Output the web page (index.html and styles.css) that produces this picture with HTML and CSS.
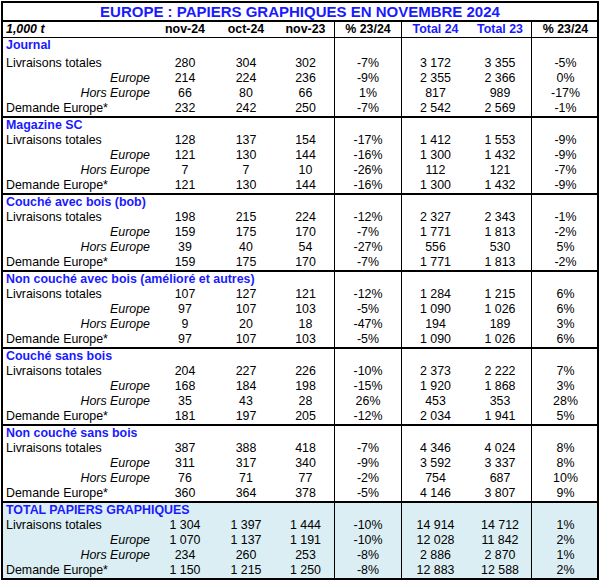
FILE: index.html
```html
<!DOCTYPE html>
<html lang="fr">
<head>
<meta charset="utf-8">
<title>Europe : papiers graphiques</title>
<link rel="stylesheet" href="styles.css">
</head>
<body>
<div class="sheet">
  <div class="title">EUROPE : PAPIERS GRAPHIQUES EN NOVEMBRE 2024</div>
  <div class="row head">
    <span class="lab unit">1,000 t</span><span>nov-24</span><span>oct-24</span><span>nov-23</span><span>% 23/24</span><span class="blue">Total 24</span><span class="blue">Total 23</span><span>% 23/24</span>
  </div>

  <div class="sec first">
    <div class="row st"><span class="lab sect">Journal</span><span></span><span></span><span></span><span></span><span></span><span></span><span></span></div>
    <div class="row"><span class="lab">Livraisons totales</span><span>280</span><span>304</span><span>302</span><span>-7%</span><span>3 172</span><span>3 355</span><span>-5%</span></div>
    <div class="row"><span class="sub">Europe</span><span>214</span><span>224</span><span>236</span><span>-9%</span><span>2 355</span><span>2 366</span><span>0%</span></div>
    <div class="row"><span class="sub">Hors Europe</span><span>66</span><span>80</span><span>66</span><span>1%</span><span>817</span><span>989</span><span>-17%</span></div>
    <div class="row"><span class="lab">Demande Europe*</span><span>232</span><span>242</span><span>250</span><span>-7%</span><span>2 542</span><span>2 569</span><span>-1%</span></div>
  </div>

  <div class="sec">
    <div class="row"><span class="lab sect">Magazine SC</span><span></span><span></span><span></span><span></span><span></span><span></span><span></span></div>
    <div class="row"><span class="lab">Livraisons totales</span><span>128</span><span>137</span><span>154</span><span>-17%</span><span>1 412</span><span>1 553</span><span>-9%</span></div>
    <div class="row"><span class="sub">Europe</span><span>121</span><span>130</span><span>144</span><span>-16%</span><span>1 300</span><span>1 432</span><span>-9%</span></div>
    <div class="row"><span class="sub">Hors Europe</span><span>7</span><span>7</span><span>10</span><span>-26%</span><span>112</span><span>121</span><span>-7%</span></div>
    <div class="row"><span class="lab">Demande Europe*</span><span>121</span><span>130</span><span>144</span><span>-16%</span><span>1 300</span><span>1 432</span><span>-9%</span></div>
  </div>

  <div class="sec">
    <div class="row"><span class="lab sect">Couché avec bois (bob)</span><span></span><span></span><span></span><span></span><span></span><span></span><span></span></div>
    <div class="row"><span class="lab">Livraisons totales</span><span>198</span><span>215</span><span>224</span><span>-12%</span><span>2 327</span><span>2 343</span><span>-1%</span></div>
    <div class="row"><span class="sub">Europe</span><span>159</span><span>175</span><span>170</span><span>-7%</span><span>1 771</span><span>1 813</span><span>-2%</span></div>
    <div class="row"><span class="sub">Hors Europe</span><span>39</span><span>40</span><span>54</span><span>-27%</span><span>556</span><span>530</span><span>5%</span></div>
    <div class="row"><span class="lab">Demande Europe*</span><span>159</span><span>175</span><span>170</span><span>-7%</span><span>1 771</span><span>1 813</span><span>-2%</span></div>
  </div>

  <div class="sec">
    <div class="row"><span class="lab sect">Non couché avec bois (amélioré et autres)</span><span></span><span></span><span></span><span></span><span></span><span></span><span></span></div>
    <div class="row"><span class="lab">Livraisons totales</span><span>107</span><span>127</span><span>121</span><span>-12%</span><span>1 284</span><span>1 215</span><span>6%</span></div>
    <div class="row"><span class="sub">Europe</span><span>97</span><span>107</span><span>103</span><span>-5%</span><span>1 090</span><span>1 026</span><span>6%</span></div>
    <div class="row"><span class="sub">Hors Europe</span><span>9</span><span>20</span><span>18</span><span>-47%</span><span>194</span><span>189</span><span>3%</span></div>
    <div class="row"><span class="lab">Demande Europe*</span><span>97</span><span>107</span><span>103</span><span>-5%</span><span>1 090</span><span>1 026</span><span>6%</span></div>
  </div>

  <div class="sec">
    <div class="row"><span class="lab sect">Couché sans bois</span><span></span><span></span><span></span><span></span><span></span><span></span><span></span></div>
    <div class="row"><span class="lab">Livraisons totales</span><span>204</span><span>227</span><span>226</span><span>-10%</span><span>2 373</span><span>2 222</span><span>7%</span></div>
    <div class="row"><span class="sub">Europe</span><span>168</span><span>184</span><span>198</span><span>-15%</span><span>1 920</span><span>1 868</span><span>3%</span></div>
    <div class="row"><span class="sub">Hors Europe</span><span>35</span><span>43</span><span>28</span><span>26%</span><span>453</span><span>353</span><span>28%</span></div>
    <div class="row"><span class="lab">Demande Europe*</span><span>181</span><span>197</span><span>205</span><span>-12%</span><span>2 034</span><span>1 941</span><span>5%</span></div>
  </div>

  <div class="sec">
    <div class="row"><span class="lab sect">Non couché sans bois</span><span></span><span></span><span></span><span></span><span></span><span></span><span></span></div>
    <div class="row"><span class="lab">Livraisons totales</span><span>387</span><span>388</span><span>418</span><span>-7%</span><span>4 346</span><span>4 024</span><span>8%</span></div>
    <div class="row"><span class="sub">Europe</span><span>311</span><span>317</span><span>340</span><span>-9%</span><span>3 592</span><span>3 337</span><span>8%</span></div>
    <div class="row"><span class="sub">Hors Europe</span><span>76</span><span>71</span><span>77</span><span>-2%</span><span>754</span><span>687</span><span>10%</span></div>
    <div class="row"><span class="lab">Demande Europe*</span><span>360</span><span>364</span><span>378</span><span>-5%</span><span>4 146</span><span>3 807</span><span>9%</span></div>
  </div>

  <div class="sec total">
    <div class="row"><span class="lab sect">TOTAL PAPIERS GRAPHIQUES</span><span></span><span></span><span></span><span></span><span></span><span></span><span></span></div>
    <div class="row"><span class="lab">Livraisons totales</span><span>1 304</span><span>1 397</span><span>1 444</span><span>-10%</span><span>14 914</span><span>14 712</span><span>1%</span></div>
    <div class="row"><span class="sub">Europe</span><span>1 070</span><span>1 137</span><span>1 191</span><span>-10%</span><span>12 028</span><span>11 842</span><span>2%</span></div>
    <div class="row"><span class="sub">Hors Europe</span><span>234</span><span>260</span><span>253</span><span>-8%</span><span>2 886</span><span>2 870</span><span>1%</span></div>
    <div class="row"><span class="lab">Demande Europe*</span><span>1 150</span><span>1 215</span><span>1 250</span><span>-8%</span><span>12 883</span><span>12 588</span><span>2%</span></div>
  </div>
</div>
</body>
</html>
```

FILE: styles.css
```css
html, body {
  background: #ffffff;
}

body {
  margin: 1px 0 0 1px;
  font-family: "Liberation Sans", Arial, sans-serif;
  font-size: 12.4px;
  color: #000000;
}

.sheet {
  width: 594px;
  border: 2px solid #000000;
}

.title {
  height: 17px;
  line-height: 17px;
  text-align: center;
  font-weight: bold;
  font-size: 15px;
  color: #1a1aff;
  border-bottom: 2px solid #000000;
}

.row {
  display: grid;
  grid-template-columns: 152px 60px 62px 57px 67px 68px 62px 66px;
  height: 15px;
  line-height: 15px;
}

.row > span {
  text-align: center;
  white-space: nowrap;
}

.row > span:nth-child(5),
.row > span:nth-child(6),
.row > span:nth-child(8) {
  border-left: 1px solid #000000;
}

.row > span:nth-child(8) {
  padding-left: 2px;
}

.head {
  font-weight: bold;
  border-bottom: 1px solid #000000;
}

.head .unit {
  font-style: italic;
}

.blue {
  color: #1a1aff;
}

.lab {
  text-align: left !important;
  padding-left: 3px;
}

.sub {
  text-align: right !important;
  padding-right: 5px;
  font-style: italic;
}

.sect {
  font-weight: bold;
  color: #1a1aff;
}

.sec + .sec {
  border-top: 2px solid #000000;
}

.first .st {
  height: 18px;
  line-height: 15px;
}

.total {
  background: #daeef3;
}
```
